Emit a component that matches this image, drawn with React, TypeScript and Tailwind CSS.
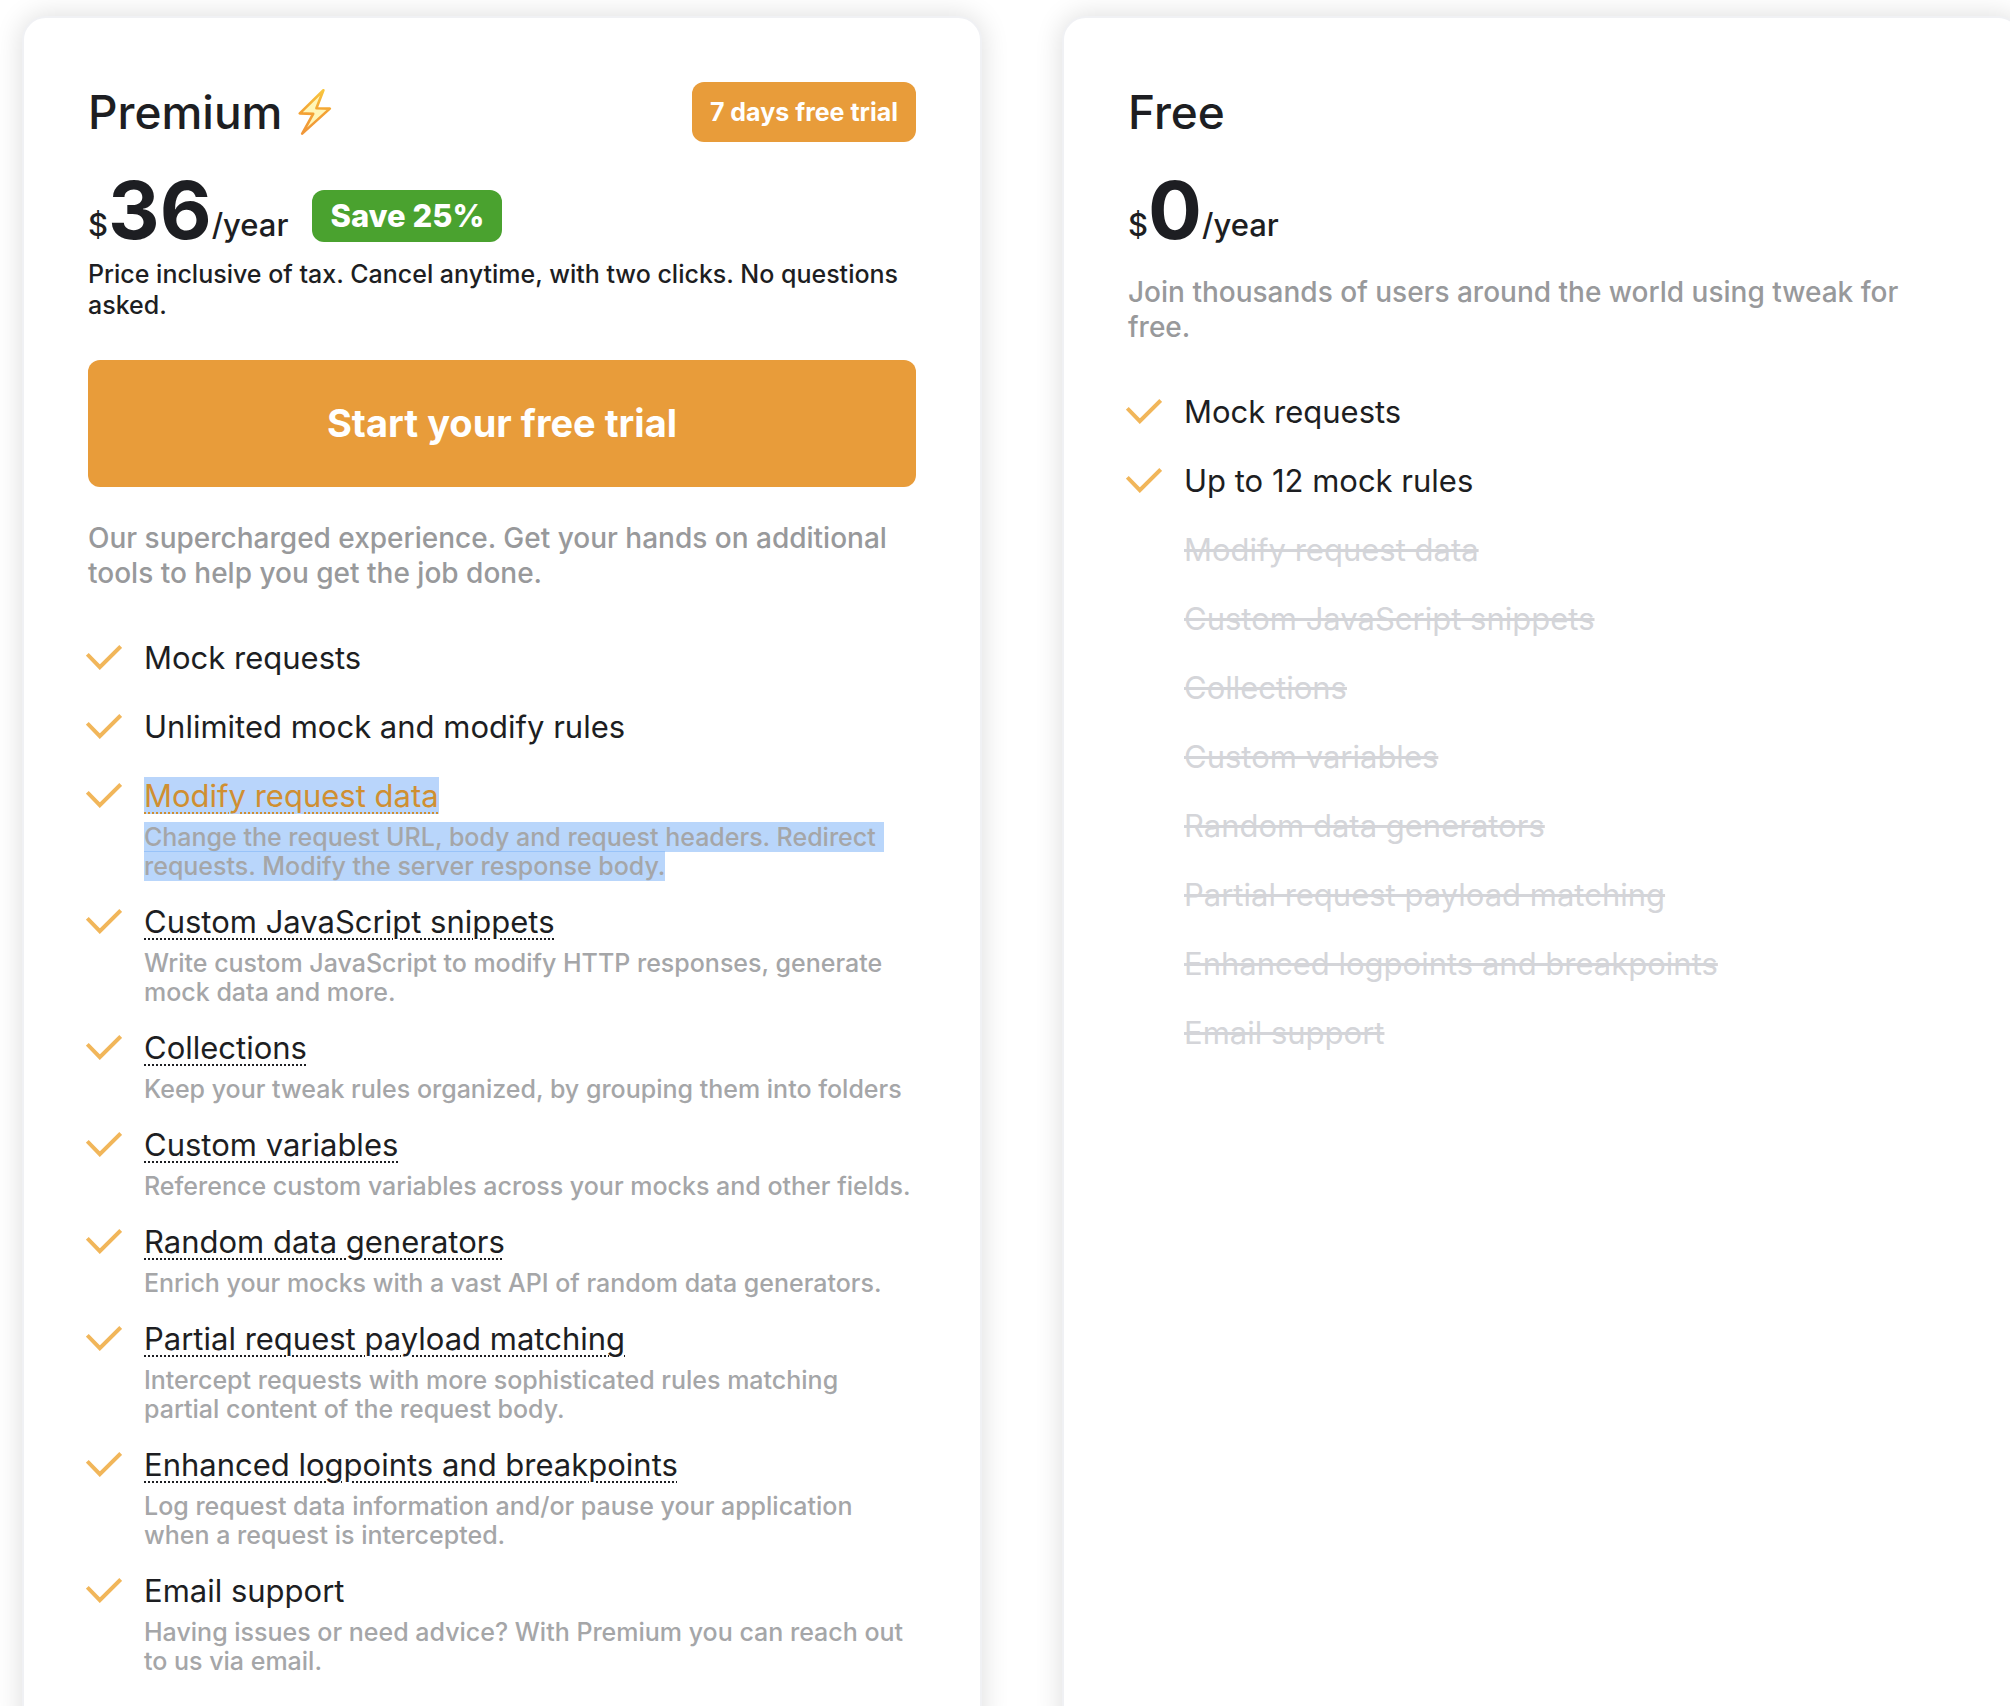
import React from "react";

type Feature = {
  title: string;
  description?: React.ReactNode;
  tooltip?: boolean;
  selected?: boolean;
  excluded?: boolean;
};

const premiumFeatures: Feature[] = [
  { title: "Mock requests" },
  { title: "Unlimited mock and modify rules" },
  {
    title: "Modify request data",
    tooltip: true,
    selected: true,
    description: (
      <>
        <span className="bg-[rgb(123_178_247/0.53)] pr-2">
          Change the request URL, body and request headers. Redirect
        </span>{" "}
        <span className="bg-[rgb(123_178_247/0.53)]">requests. Modify the server response body.</span>
      </>
    ),
  },
  {
    title: "Custom JavaScript snippets",
    tooltip: true,
    description: "Write custom JavaScript to modify HTTP responses, generate mock data and more.",
  },
  {
    title: "Collections",
    tooltip: true,
    description: "Keep your tweak rules organized, by grouping them into folders",
  },
  {
    title: "Custom variables",
    tooltip: true,
    description: "Reference custom variables across your mocks and other fields.",
  },
  {
    title: "Random data generators",
    tooltip: true,
    description: "Enrich your mocks with a vast API of random data generators.",
  },
  {
    title: "Partial request payload matching",
    tooltip: true,
    description: "Intercept requests with more sophisticated rules matching partial content of the request body.",
  },
  {
    title: "Enhanced logpoints and breakpoints",
    tooltip: true,
    description: "Log request data information and/or pause your application when a request is intercepted.",
  },
  {
    title: "Email support",
    description: "Having issues or need advice? With Premium you can reach out to us via email.",
  },
];

const freeFeatures: Feature[] = [
  { title: "Mock requests" },
  { title: "Up to 12 mock rules" },
  { title: "Modify request data", excluded: true },
  { title: "Custom JavaScript snippets", excluded: true },
  { title: "Collections", excluded: true },
  { title: "Custom variables", excluded: true },
  { title: "Random data generators", excluded: true },
  { title: "Partial request payload matching", excluded: true },
  { title: "Enhanced logpoints and breakpoints", excluded: true },
  { title: "Email support", excluded: true },
];

function CheckIcon() {
  return (
    <svg viewBox="0 0 36 25" className="mt-1.5 h-[25px] w-9" fill="none" aria-hidden="true">
      <path d="M1.3 9.3 13.8 22.2 34.7 1.5" stroke="#f1b65a" strokeWidth="4" />
    </svg>
  );
}

function BoltIcon() {
  return (
    <svg viewBox="0 0 34 48" className="h-12 w-[34px]" aria-hidden="true">
      <defs>
        <linearGradient id="bolt-edge" x1="0" y1="0" x2="0" y2="1">
          <stop offset="0" stopColor="#f8c63f" />
          <stop offset="0.5" stopColor="#f3a233" />
          <stop offset="1" stopColor="#f0973a" />
        </linearGradient>
      </defs>
      <path
        d="M25.4 2.2 1.8 25.4 15.2 25.9 4.2 45.6 31.8 20.6 18.4 20.2Z"
        fill="#fff6b8"
        stroke="url(#bolt-edge)"
        strokeWidth="2.6"
        strokeLinejoin="round"
      />
    </svg>
  );
}

function FeatureItem({ feature }: { feature: Feature }) {
  const { title, description, tooltip, selected, excluded } = feature;
  return (
    <li className="flex">
      <div className="w-[58px] shrink-0">{!excluded && <CheckIcon />}</div>
      <div className="min-w-0 flex-1">
        <h3 className="mb-2 text-[31px] leading-[38px]">
          {excluded ? (
            <s className="text-[#d4d5d9]">{title}</s>
          ) : selected ? (
            <span className="bg-[#b9d5fb] text-[#d08f31] underline decoration-dotted decoration-2 underline-offset-[5px]">
              {title}
            </span>
          ) : tooltip ? (
            <span className="underline decoration-dotted decoration-2 underline-offset-[5px]">{title}</span>
          ) : (
            title
          )}
        </h3>
        {description && <p className="-mb-px text-[25px] leading-[29px] font-medium text-[#a5a6a8]">{description}</p>}
      </div>
    </li>
  );
}

function FeatureList({ features }: { features: Feature[] }) {
  return (
    <ul className="mt-12 -ml-0.5 flex flex-col gap-[23px]">
      {features.map((f) => (
        <FeatureItem key={f.title} feature={f} />
      ))}
    </ul>
  );
}

function Price({ amount, children }: { amount: string; children?: React.ReactNode }) {
  return (
    <div className="mt-[26px] flex items-end">
      <span className="text-[31px] leading-[54px] font-medium">$</span>
      <span className="text-[80px] leading-[84px] font-bold">{amount}</span>
      <span className="text-[31px] leading-[54px] font-medium">/year</span>
      {children}
    </div>
  );
}

function Card({ children }: { children: React.ReactNode }) {
  return (
    <section className="rounded-3xl border-2 border-[#f0f1f4] bg-white p-16 shadow-[0_0_28px_rgba(0,0,0,0.14)]">
      {children}
    </section>
  );
}

export default function App() {
  return (
    <div className="h-screen overflow-hidden bg-white font-['Inter',sans-serif] text-[#1d1e22]">
      <main className="-mr-3 ml-[22px] grid grid-cols-2 gap-20 pt-4">
        <Card>
          <header className="flex h-[60px] items-center justify-between">
            <h2 className="flex items-center gap-4 text-[46px] font-medium">
              Premium <BoltIcon />
            </h2>
            <span className="rounded-xl bg-[#e89c3a] px-[18px] text-[25px] leading-[60px] font-bold text-white">
              7 days free trial
            </span>
          </header>
          <Price amount="36">
            <span className="mb-2.5 ml-6 rounded-xl bg-[#4aa22f] px-[18px] text-[31px] leading-[52px] font-extrabold text-white">
              Save 25%
            </span>
          </Price>
          <p className="mt-[7px] text-[25px] leading-[31px] font-medium">
            Price inclusive of tax. Cancel anytime, with two clicks. No questions asked.
          </p>
          <button
            type="button"
            className="mt-[39px] h-[127px] w-full rounded-xl bg-[#e89c3a] text-[38px] font-bold text-white"
          >
            Start your free trial
          </button>
          <p className="mt-[34px] text-[28px] leading-[35px] font-medium text-[#98999b]">
            Our supercharged experience. Get your hands on additional tools to help you get the job done.
          </p>
          <FeatureList features={premiumFeatures} />
        </Card>
        <Card>
          <header className="flex h-[60px] items-center">
            <h2 className="text-[46px] font-medium">Free</h2>
          </header>
          <Price amount="0" />
          <p className="mt-[23px] text-[28px] leading-[35px] font-medium text-[#98999b]">
            Join thousands of users around the world using tweak for free.
          </p>
          <FeatureList features={freeFeatures} />
        </Card>
      </main>
    </div>
  );
}
